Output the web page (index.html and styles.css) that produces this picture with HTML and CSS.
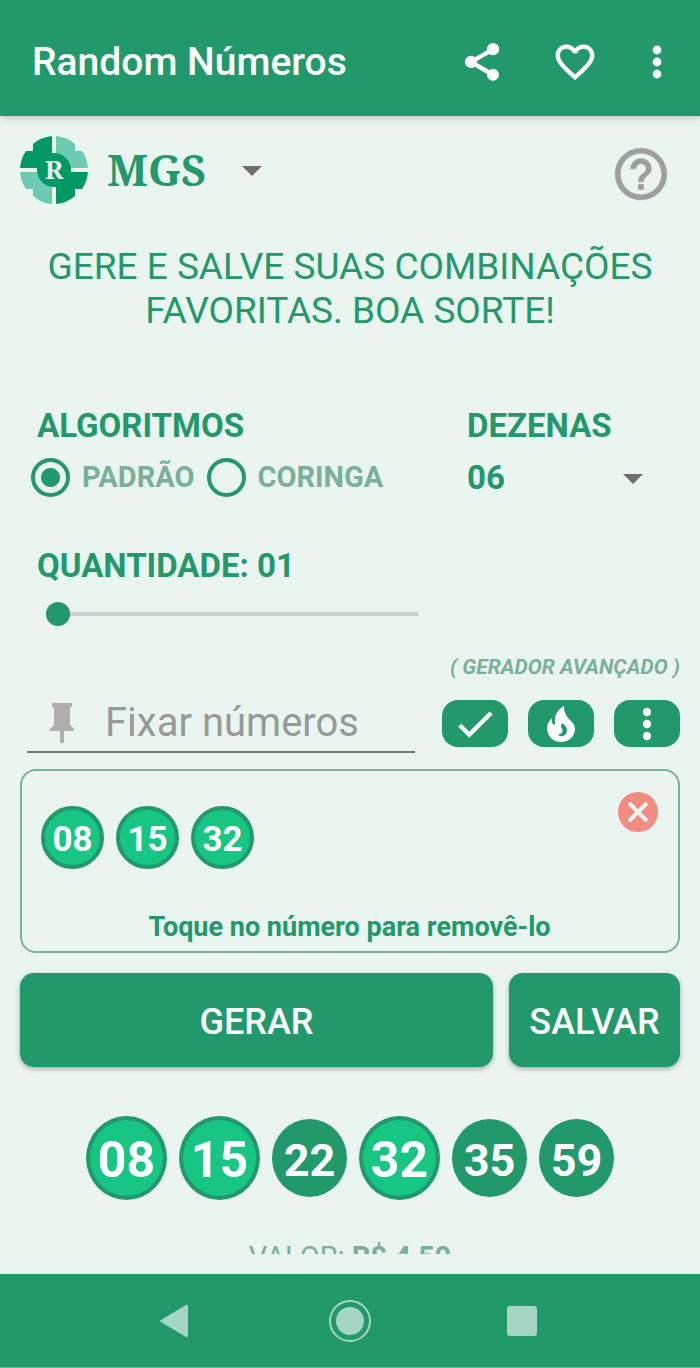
FILE: index.html
```html
<!DOCTYPE html>
<html lang="pt-BR">
  <head>
    <meta charset="UTF-8" />
    <meta name="viewport" content="width=device-width, initial-scale=1.0" />
    <title>Random Números</title>
    <link rel="stylesheet" href="styles.css">
  </head>
  <body>
    <header class="app-bar">
      <h1>Random Números</h1>
      <button class="icon-button" aria-label="Compartilhar">
        <svg width="44" height="44" viewBox="0 0 24 24" fill="#fff" stroke="#fff" stroke-width="0.7"><path d="M18 16.08c-.76 0-1.44.3-1.96.77L8.91 12.7c.05-.23.09-.46.09-.7s-.04-.47-.09-.7l7.05-4.11c.54.5 1.25.81 2.04.81 1.66 0 3-1.34 3-3s-1.34-3-3-3-3 1.34-3 3c0 .24.04.47.09.7L8.04 9.81C7.5 9.31 6.79 9 6 9c-1.66 0-3 1.34-3 3s1.34 3 3 3c.79 0 1.5-.31 2.04-.81l7.12 4.16c-.05.21-.08.43-.08.65 0 1.61 1.31 2.92 2.92 2.92s2.92-1.31 2.92-2.92-1.31-2.92-2.92-2.92z"/></svg>
      </button>
      <button class="icon-button" aria-label="Favoritos">
        <svg width="46" height="46" viewBox="0 0 24 24" fill="#fff" stroke="#fff" stroke-width="0.3"><path d="M16.5 3c-1.74 0-3.41.81-4.5 2.09C10.91 3.81 9.24 3 7.5 3 4.42 3 2 5.42 2 8.5c0 3.78 3.4 6.86 8.55 11.54L12 21.35l1.45-1.32C18.6 15.36 22 12.28 22 8.5 22 5.42 19.58 3 16.5 3zm-4.4 15.55l-.1.1-.1-.1C7.14 14.24 4 11.39 4 8.5 4 6.5 5.5 5 7.5 5c1.54 0 3.04.99 3.57 2.36h1.87C13.46 5.99 14.96 5 16.5 5c2 0 3.5 1.5 3.5 3.5 0 2.89-3.14 5.74-7.9 10.05z"/></svg>
      </button>
      <button class="icon-button" aria-label="Mais opções">
        <svg width="22" height="48" viewBox="0 0 22 48" fill="#fff"><circle cx="11" cy="12" r="4.4"/><circle cx="11" cy="24" r="4.4"/><circle cx="11" cy="36" r="4.4"/></svg>
      </button>
    </header>

    <main class="content">
      <div class="brand">
        <svg width="68" height="70" viewBox="0 0 68 70">
          <path fill="#009966" d="M32 1V33H0Q1 23 6 16H13V9Q21 2 32 1z"/>
          <path fill="#6ccbb0" d="M36 1V33H68Q67 23 62 16H55V9Q47 2 36 1z"/>
          <path fill="#6ccbb0" d="M32 69V37H0Q1 47 6 54H13V61Q21 68 32 69z"/>
          <path fill="#009966" d="M36 69V37H68Q67 47 62 54H55V61Q47 68 36 69z"/>
          <circle cx="34" cy="35" r="17" fill="#009966"/>
          <text x="34" y="44" class="logo-letter">R</text>
        </svg>
        <div class="dropdown game">
          <select aria-label="Jogo">
            <option>MGS</option>
          </select>
        </div>
        <button class="icon-button help" aria-label="Ajuda">
          <svg width="62" height="62" viewBox="0 0 24 24" fill="#9e9e9e" stroke="#9e9e9e" stroke-width="0.2"><path d="M11 18h2v-2h-2v2zm1-16C6.48 2 2 6.48 2 12s4.48 10 10 10 10-4.48 10-10S17.52 2 12 2zm0 18c-4.41 0-8-3.59-8-8s3.59-8 8-8 8 3.59 8 8-3.59 8-8 8zm0-14c-2.21 0-4 1.79-4 4h2c0-1.1.9-2 2-2s2 .9 2 2c0 2-3 1.75-3 5h2c0-2.25 3-2.5 3-5 0-2.21-1.79-4-4-4z"/></svg>
        </button>
      </div>

      <p class="tagline">GERE E SALVE SUAS COMBINAÇÕES FAVORITAS. BOA SORTE!</p>

      <div class="options">
        <div class="algorithms">
          <h2>ALGORITMOS</h2>
          <div class="radios">
            <label><input type="radio" name="algoritmo" checked />PADRÃO</label>
            <label><input type="radio" name="algoritmo" />CORINGA</label>
          </div>
        </div>
        <div class="tens">
          <label class="heading" for="dezenas">DEZENAS</label>
          <div class="dropdown">
            <select id="dezenas">
              <option>06</option>
            </select>
          </div>
        </div>
      </div>

      <div class="quantity">
        <label class="heading" for="quantidade">QUANTIDADE: 01</label>
        <input type="range" id="quantidade" min="1" max="50" value="1" />
      </div>

      <p class="advanced">( GERADOR AVANÇADO )</p>

      <div class="fix-row">
        <div class="fix-field">
          <svg width="24" height="40" viewBox="0 0 24 40" fill="#b0adae"><path d="M2 0H22V4H20V22L24 26V28H14V40H10V28H0V26L4 22V4H2z"/></svg>
          <input type="text" aria-label="Fixar números" placeholder="Fixar números" />
        </div>
        <div class="tools">
          <button aria-label="Confirmar">
            <svg width="46" height="46" viewBox="0 0 24 24" fill="#fff" stroke="#fff" stroke-width="0.3"><path d="M9 16.17L4.83 12l-1.42 1.41L9 19 21 7l-1.41-1.41z"/></svg>
          </button>
          <button aria-label="Números quentes">
            <svg width="28" height="36" viewBox="0 0 28 36"><path fill="#fff" d="M17 0C10 4 7 10 8 17Q8 19 7 19Q4 17 5 12C2 15 0 18 0 22C0 30 6 36 14 36S28 30 28 23C28 14 17 14 17 0z"/><path fill="#22996a" d="M15 17Q13 20 15 23T13 28Q11 29 11 29Q15 32 19 28Q22 21 15 17z"/></svg>
          </button>
          <button aria-label="Mais">
            <svg width="22" height="44" viewBox="0 0 22 44" fill="#fff"><circle cx="11" cy="10" r="4.2"/><circle cx="11" cy="22" r="4.2"/><circle cx="11" cy="34" r="4.2"/></svg>
          </button>
        </div>
      </div>

      <section class="fixed-box">
        <div class="fixed-top">
          <div class="fixed-balls">
            <button class="ball">08</button>
            <button class="ball">15</button>
            <button class="ball">32</button>
          </div>
          <button class="icon-button close" aria-label="Limpar">
            <svg width="40" height="40" viewBox="0 0 40 40"><circle cx="20" cy="20" r="20" fill="#f28b82"/><path d="M11 11L29 29M29 11L11 29" stroke="#ebf5f0" stroke-width="4"/></svg>
          </button>
        </div>
        <p>Toque no número para removê-lo</p>
      </section>

      <div class="actions">
        <button class="generate">GERAR</button>
        <button class="save">SALVAR</button>
      </div>

      <div class="result">
        <span class="number picked">08</span>
        <span class="number picked">15</span>
        <span class="number">22</span>
        <span class="number picked">32</span>
        <span class="number">35</span>
        <span class="number">59</span>
      </div>

      <p class="price">VALOR: <b>R$ 4,50</b></p>
    </main>

    <nav class="nav-bar">
      <button class="icon-button" aria-label="Voltar">
        <svg width="44" height="44" viewBox="0 0 44 44" fill="#a6d6c3"><path d="M30 6Q32 5 32 8V36Q32 39 30 38L5 23Q3 22 5 21z"/></svg>
      </button>
      <button class="icon-button" aria-label="Início">
        <svg width="44" height="44" viewBox="0 0 44 44"><circle cx="22" cy="22" r="20" fill="none" stroke="#a6d6c3" stroke-width="2"/><circle cx="22" cy="22" r="14" fill="#a6d6c3"/></svg>
      </button>
      <button class="icon-button" aria-label="Recentes">
        <svg width="44" height="44" viewBox="0 0 44 44"><rect x="7" y="7" width="30" height="30" rx="3" fill="#a6d6c3"/></svg>
      </button>
    </nav>
  </body>
</html>
```
FILE: styles.css
```css
* {
  box-sizing: border-box;
}

body {
  margin: 0;
  height: 100vh;
  display: flex;
  flex-direction: column;
  background: #ebf5f0;
  color: #22996a;
  font-family: Roboto, sans-serif;
}

h1,
h2,
p {
  margin: 0;
}

button,
input,
select {
  font-family: inherit;
  color: inherit;
  margin: 0;
  padding: 0;
  border: none;
  background: none;
}

button {
  cursor: pointer;
}

svg {
  display: block;
}

.icon-button {
  flex: none;
}

.app-bar {
  display: flex;
  align-items: center;
  height: 116px;
  padding: 8px 32px 0;
  background: #22996a;
  color: #fff;
  box-shadow: 0 2px 6px rgba(0, 0, 0, 0.2);
  flex: none;
}

.app-bar h1 {
  flex: 1;
  font-size: 39px;
  font-weight: 500;
}

.app-bar .icon-button {
  margin-left: 48px;
}

.content {
  flex: 1;
  min-height: 0;
  overflow: hidden;
  padding: 16px 20px 0;
  margin-bottom: 20px;
}

.brand {
  display: flex;
  align-items: center;
  height: 76px;
}

.logo-letter {
  font: bold 26px "Noto Serif", "Liberation Serif", serif;
  fill: #ebf5f0;
  text-anchor: middle;
}

.dropdown {
  position: relative;
}

.dropdown::after {
  content: "";
  position: absolute;
  right: 0;
  top: 50%;
  margin-top: -4px;
  border: 10px solid transparent;
  border-top-color: #6e6e6e;
  border-bottom: none;
  pointer-events: none;
}

.dropdown select {
  appearance: none;
  display: block;
  width: 100%;
  font-size: 33px;
  line-height: 40px;
  font-weight: bold;
}

.game {
  width: 155px;
  margin-left: 19px;
}

.game select {
  font-family: "Noto Serif", "Liberation Serif", serif;
  font-size: 43px;
  line-height: 50px;
}

.help {
  margin-left: auto;
  margin-right: 8px;
  padding-top: 8px;
}

.tagline {
  margin-top: 37px;
  font-size: 37px;
  line-height: 44px;
  text-align: center;
}

h2,
.heading {
  display: block;
  font-size: 33px;
  line-height: 40px;
  font-weight: bold;
}

.options {
  display: flex;
  justify-content: space-between;
  margin-top: 73px;
  padding: 0 37px 0 17px;
}

.radios {
  display: flex;
  gap: 12px;
  margin: 11px 0 0 -6px;
}

.radios label {
  display: flex;
  align-items: center;
  gap: 12px;
  color: #7ab09a;
  font-size: 29px;
  line-height: 40px;
  font-weight: bold;
}

.radios input {
  appearance: none;
  width: 39px;
  height: 39px;
  border: 4px solid #22996a;
  border-radius: 50%;
}

.radios input:checked {
  background: radial-gradient(circle, #22996a 9px, transparent 10px);
}

.tens {
  width: 176px;
}

.tens .dropdown {
  margin-top: 12px;
}

.quantity {
  width: 400px;
  margin-top: 48px;
  padding-left: 17px;
}

.quantity input {
  appearance: none;
  display: block;
  width: 372px;
  height: 24px;
  margin: 16px 0 0 9px;
  background: linear-gradient(#cad0cc, #cad0cc) right center / 360px 4px no-repeat;
}

.quantity input::-webkit-slider-thumb {
  appearance: none;
  width: 24px;
  height: 24px;
  border-radius: 50%;
  background: #22996a;
}

.advanced {
  margin-top: 28px;
  color: #7ab09a;
  font-size: 21px;
  line-height: 26px;
  font-weight: bold;
  font-style: italic;
  text-align: right;
}

.fix-row {
  display: flex;
  align-items: flex-start;
  gap: 27px;
  margin-top: 12px;
  padding-left: 7px;
}

.fix-field {
  flex: 1;
  min-width: 0;
  display: flex;
  align-items: center;
  gap: 31px;
  height: 61px;
  padding: 2px 0 0 23px;
  border-bottom: 2px solid #747a77;
  margin-bottom: 16px;
}

.fix-field svg {
  flex: none;
}

.fix-field input {
  flex: 1;
  min-width: 0;
  font-size: 40px;
  outline: none;
}

.fix-field input::placeholder {
  color: #949b97;
  opacity: 1;
}

.tools {
  display: flex;
  gap: 20px;
  padding-top: 8px;
}

.tools button {
  display: flex;
  align-items: center;
  justify-content: center;
  width: 66px;
  height: 47px;
  border-radius: 16px;
  background: #22996a;
}

.fixed-box {
  height: 184px;
  border: 2px solid #7ab09a;
  border-radius: 16px;
  padding: 21px 20px 8px 19px;
  display: flex;
  flex-direction: column;
  justify-content: space-between;
}

.fixed-top {
  display: flex;
  justify-content: space-between;
  align-items: flex-start;
}

.fixed-balls {
  display: flex;
  gap: 12px;
  padding-top: 14px;
}

.ball {
  width: 63px;
  height: 63px;
  padding-top: 4px;
  border: 4px solid #22996a;
  border-radius: 50%;
  background: #18c683;
  color: #fff;
  font-size: 35px;
  font-weight: bold;
}

.fixed-box p {
  font-size: 27px;
  line-height: 32px;
  font-weight: bold;
  text-align: center;
}

.actions {
  display: flex;
  gap: 16px;
  margin-top: 20px;
}

.actions button {
  height: 94px;
  padding-top: 4px;
  border-radius: 14px;
  background: #22996a;
  color: #fff;
  font-size: 36px;
  font-weight: 500;
  box-shadow: 0 2px 5px rgba(0, 0, 0, 0.3);
}

.generate {
  flex: 1;
}

.save {
  width: 171px;
}

.result {
  display: flex;
  justify-content: center;
  align-items: center;
  gap: 12px;
  margin-top: 49px;
}

.number {
  display: flex;
  align-items: center;
  justify-content: center;
  width: 75px;
  height: 78px;
  padding-top: 4px;
  border-radius: 50%;
  background: #22996a;
  color: #fff;
  font-size: 45px;
  font-weight: bold;
}

.picked {
  width: 81px;
  height: 84px;
  border: 4px solid #22996a;
  background: #18c683;
  font-size: 50px;
}

.price {
  margin-top: 40px;
  color: #7ab09a;
  font-size: 29px;
  line-height: 34px;
  text-align: center;
}

.nav-bar {
  display: flex;
  justify-content: center;
  gap: 128px;
  align-items: center;
  height: 94px;
  background: #22996a;
  border-bottom: 1px solid #6cb99a;
  flex: none;
}
```
